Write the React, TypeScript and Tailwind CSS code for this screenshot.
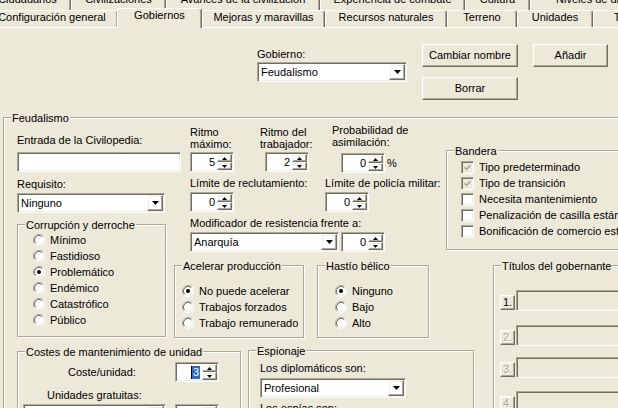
import React from "react";

// classic beige 3D borders
const SUNKEN =
  "border border-t-[#ACA899] border-l-[#ACA899] border-b-white border-r-white shadow-[inset_1px_1px_0_#716F64,inset_-1px_-1px_0_#F1EFE2]";
const RAISED =
  "border border-t-white border-l-white border-b-[#716F64] border-r-[#716F64] shadow-[inset_-1px_-1px_0_#ACA899,inset_1px_1px_0_#F1EFE2]";

const TOP_TABS = [
  { label: "Ciudadanos", w: "w-[87px]" },
  { label: "Civilizaciones", w: "w-[95px]" },
  { label: "Avances de la civilización", w: "w-[154px]" },
  { label: "Experiencia de combate", w: "w-[145px]" },
  { label: "Cultura", w: "w-[65px]" },
  { label: "Niveles de dificultad", w: "w-[150px]" },
];

const TABS = [
  { label: "Configuración general", w: "w-[132px]" },
  { label: "Gobiernos", w: "w-[85px]", sel: true },
  { label: "Mejoras y maravillas", w: "w-[123px]" },
  { label: "Recursos naturales", w: "w-[122px]" },
  { label: "Terreno", w: "w-[70px]" },
  { label: "Unidades", w: "w-[76px]" },
  { label: "Tecnologías", w: "w-[100px]" },
];

function Tab({ label, w, sel }: { label: string; w: string; sel?: boolean }) {
  return (
    <div
      className={`${w} shrink-0 border-t border-l border-r border-t-white border-l-white border-r-[#716F64] shadow-[inset_-1px_0_0_#ACA899] rounded-t-[3px] text-center whitespace-nowrap overflow-hidden bg-[#ECE9D8] ${
        sel ? "relative z-10 -ml-[1px] -mt-[2px] h-[20px]" : "h-full"
      }`}
    >
      {label}
    </div>
  );
}

function Btn({ children, className = "" }: { children: React.ReactNode; className?: string }) {
  return (
    <div className={`${RAISED} flex items-center justify-center whitespace-nowrap ${className}`}>
      {children}
    </div>
  );
}

function Combo({ text, className = "" }: { text: string; className?: string }) {
  return (
    <div className={`flex h-[20px] bg-white p-[1px] ${SUNKEN} ${className}`}>
      <div className="flex-1 pl-[2px] flex items-center whitespace-nowrap overflow-hidden">{text}</div>
      <div className={`w-[16px] ${RAISED} flex items-center justify-center`}>
        <svg width="7" height="4" viewBox="0 0 7 4">
          <path d="M0 0h7L3.5 4z" fill="#000" />
        </svg>
      </div>
    </div>
  );
}

function SpinBtn({ up }: { up?: boolean }) {
  return (
    <div className={`flex-1 ${RAISED} flex items-center justify-center`}>
      <svg width="5" height="3" viewBox="0 0 5 3">
        <path d={up ? "M0 3h5L2.5 0z" : "M0 0h5L2.5 3z"} fill="#000" />
      </svg>
    </div>
  );
}

function Spinner({ value, sel, className = "" }: { value: string; sel?: boolean; className?: string }) {
  return (
    <div className={`flex w-[44px] h-[20px] bg-white p-[1px] ${SUNKEN} ${className}`}>
      <div className="flex-1 flex items-center justify-end pr-[2px]">
        {sel ? (
          <span className="flex items-center">
            <span className="w-[1px] h-[13px] bg-black" />
            <span className="bg-[#316AC5] text-white px-[1px]">{value}</span>
          </span>
        ) : (
          value
        )}
      </div>
      <div className="flex flex-col w-[15px]">
        <SpinBtn up />
        <SpinBtn />
      </div>
    </div>
  );
}

function Group({
  label,
  className = "",
  children,
}: {
  label: string;
  className?: string;
  children?: React.ReactNode;
}) {
  return (
    <div className={`relative shrink-0 border border-[#ACA899] shadow-[inset_1px_1px_0_#fff,1px_1px_0_#fff] ${className}`}>
      <span className="absolute left-[7px] top-[-6px] bg-[#ECE9D8] px-[1px] whitespace-nowrap">{label}</span>
      {children}
    </div>
  );
}

function Radio({ label, on }: { label: string; on?: boolean }) {
  return (
    <div className="flex items-center h-[16px] gap-[5px] whitespace-nowrap">
      <svg width="12" height="12" viewBox="0 0 12 12" className="shrink-0">
        <circle cx="6" cy="6" r="5" fill="#fff" />
        <path d="M2.11 9.89A5.5 5.5 0 0 1 9.89 2.11" fill="none" stroke="#ACA899" />
        <path d="M9.89 2.11A5.5 5.5 0 0 1 2.11 9.89" fill="none" stroke="#fff" />
        <path d="M2.82 9.18A4.5 4.5 0 0 1 9.18 2.82" fill="none" stroke="#716F64" />
        <path d="M9.18 2.82A4.5 4.5 0 0 1 2.82 9.18" fill="none" stroke="#F1EFE2" />
        {on && <circle cx="6" cy="6" r="2" fill="#000" />}
      </svg>
      <span>{label}</span>
    </div>
  );
}

function Check({ label, on, disabled }: { label: string; on?: boolean; disabled?: boolean }) {
  return (
    <div className="flex items-center h-[16px] gap-[5px] whitespace-nowrap">
      <div
        className={`w-[13px] h-[13px] shrink-0 flex items-center justify-center ${SUNKEN} ${
          disabled ? "bg-[#ECE9D8]" : "bg-white"
        }`}
      >
        {on && (
          <svg width="7" height="7" viewBox="0 0 7 7">
            <path d="M0.5 3.2L2.6 5.3L6.5 1.2" fill="none" stroke={disabled ? "#ACA899" : "#000"} strokeWidth="1.6" />
          </svg>
        )}
      </div>
      <span>{label}</span>
    </div>
  );
}

function TitleRow({ n, enabled, className = "" }: { n: number; enabled?: boolean; className?: string }) {
  return (
    <div className={`flex items-center ${className}`}>
      <div
        className={`${RAISED} w-[15px] h-[15px] mt-[4px] shrink-0 flex items-center justify-center ${
          enabled ? "text-black" : "text-[#ACA899] [text-shadow:1px_1px_0_#fff]"
        }`}
      >
        {n}.
      </div>
      <div className={`ml-[1px] w-[150px] h-[21px] shrink-0 bg-[#ECE9D8] ${SUNKEN}`} />
    </div>
  );
}

export default function App() {
  return (
    <div className="w-[618px] h-[408px] overflow-hidden bg-[#ECE9D8] text-black text-[11px] leading-[13px] font-['Liberation_Sans',Arial,sans-serif]">
      {/* Tabs */}
      <div className="flex -mt-[8px] -ml-[16px] h-[18px]">
        {TOP_TABS.map((t) => (
          <Tab key={t.label} label={t.label} w={t.w} />
        ))}
      </div>
      <div className="flex -ml-[14px] h-[17px]">
        {TABS.map((t) => (
          <Tab key={t.label} label={t.label} w={t.w} sel={t.sel} />
        ))}
      </div>

      {/* Panel */}
      <div className="border-t border-white">
        {/* Government selector */}
        <div className="flex items-start pt-[16px] pl-[257px]">
          <div className="w-[150px] shrink-0">
            <div className="mt-[4px]">Gobierno:</div>
            <Combo className="mt-[1px] w-[150px]" text="Feudalismo" />
          </div>
          <div className="ml-[15px] shrink-0">
            <Btn className="w-[96px] h-[23px]">Cambiar nombre</Btn>
            <Btn className="mt-[10px] w-[96px] h-[23px]">Borrar</Btn>
          </div>
          <Btn className="ml-[15px] w-[75px] h-[23px] shrink-0">Añadir</Btn>
        </div>

        <Group label="Feudalismo" className="ml-[3px] mt-[17px] w-[700px] h-[320px]">
          <div className="flex">
            <div className="w-[442px] shrink-0">
              <div className="flex">
                {/* left column */}
                <div className="ml-[13px] w-[157px] shrink-0">
                  <div className="mt-[16px] whitespace-nowrap">Entrada de la Civilopedia:</div>
                  <div className={`mt-[5px] w-[164px] h-[20px] bg-white ${SUNKEN}`} />
                  <div className="mt-[6px]">Requisito:</div>
                  <Combo className="mt-[2px] w-[148px]" text="Ninguno" />
                  <Group label="Corrupción y derroche" className="mt-[11px] w-[149px] h-[113px] pt-[7px] pl-[15px]">
                    <Radio label="Mínimo" />
                    <Radio label="Fastidioso" />
                    <Radio label="Problemático" on />
                    <Radio label="Endémico" />
                    <Radio label="Catastrófico" />
                    <Radio label="Público" />
                  </Group>
                </div>

                {/* middle column */}
                <div className="w-[272px] shrink-0">
                  <div className="flex pl-[16px]">
                    <div className="w-[70px] shrink-0">
                      <div className="mt-[8px] leading-[12px]">
                        Ritmo
                        <br />
                        máximo:
                      </div>
                      <Spinner className="mt-[2px]" value="5" />
                    </div>
                    <div className="w-[72px] shrink-0">
                      <div className="mt-[8px] leading-[12px] whitespace-nowrap">
                        Ritmo del
                        <br />
                        trabajador:
                      </div>
                      <Spinner className="mt-[2px] ml-[5px]" value="2" />
                    </div>
                    <div className="shrink-0">
                      <div className="mt-[6px] leading-[12px] whitespace-nowrap">
                        Probabilidad de
                        <br />
                        asimilación:
                      </div>
                      <div className="mt-[5px] ml-[9px] flex items-center gap-[2px]">
                        <Spinner value="0" />
                        <span>%</span>
                      </div>
                    </div>
                  </div>

                  <div className="flex pl-[16px] mt-[4px]">
                    <div className="w-[135px] shrink-0">
                      <div className="whitespace-nowrap">Límite de reclutamiento:</div>
                      <Spinner className="mt-[2px]" value="0" />
                    </div>
                    <div className="shrink-0">
                      <div className="whitespace-nowrap">Límite de policía militar:</div>
                      <Spinner className="mt-[2px]" value="0" />
                    </div>
                  </div>

                  <div className="pl-[16px] mt-[5px]">
                    <div className="whitespace-nowrap">Modificador de resistencia frente a:</div>
                    <div className="flex mt-[2px] gap-[2px]">
                      <Combo className="w-[149px]" text="Anarquía" />
                      <Spinner value="0" />
                    </div>
                  </div>

                  <div className="flex mt-[13px]">
                    <Group label="Acelerar producción" className="w-[130px] h-[73px] pt-[17px] pl-[7px]">
                      <Radio label="No puede acelerar" on />
                      <Radio label="Trabajos forzados" />
                      <Radio label="Trabajo remunerado" />
                    </Group>
                    <Group label="Hastío bélico" className="ml-[13px] w-[112px] h-[73px] pt-[17px] pl-[17px]">
                      <Radio label="Ninguno" on />
                      <Radio label="Bajo" />
                      <Radio label="Alto" />
                    </Group>
                  </div>
                </div>
              </div>

              {/* bottom row */}
              <div className="flex items-start mt-[12px]">
                <Group label="Costes de mantenimiento de unidad" className="ml-[13px] mt-[1px] w-[224px] h-[80px]">
                  <div className="flex items-center mt-[10px]">
                    <div className="w-[157px] pl-[50px] shrink-0">Coste/unidad:</div>
                    <Spinner value="3" sel />
                  </div>
                  <div className="mt-[7px] pl-[29px]">Unidades gratuitas:</div>
                  <div className="flex mt-[2px]">
                    <Combo className="ml-[5px] w-[143px]" text="" />
                    <Spinner className="ml-[9px]" value="0" />
                  </div>
                </Group>
                <Group label="Espionaje" className="ml-[7px] w-[226px] h-[80px] pl-[11px]">
                  <div className="mt-[11px]">Los diplomáticos son:</div>
                  <Combo className="mt-[3px] w-[146px]" text="Profesional" />
                  <div className="mt-[4px]">Los espías son:</div>
                </Group>
              </div>
            </div>

            {/* right column */}
            <div className="shrink-0">
              <Group label="Bandera" className="mt-[32px] w-[200px] h-[100px] pt-[8px] pl-[14px]">
                <Check label="Tipo predeterminado" on disabled />
                <Check label="Tipo de transición" on disabled />
                <Check label="Necesita mantenimiento" />
                <Check label="Penalización de casilla estándar" />
                <Check label="Bonificación de comercio estándar" />
              </Group>
              <Group label="Títulos del gobernante" className="mt-[15px] ml-[47px] w-[200px] h-[200px] pt-[24px] pl-[6px]">
                <TitleRow n={1} enabled />
                <TitleRow n={2} className="mt-[14px]" />
                <TitleRow n={3} className="mt-[11px]" />
                <TitleRow n={4} className="mt-[13px]" />
              </Group>
            </div>
          </div>
        </Group>
      </div>
    </div>
  );
}
